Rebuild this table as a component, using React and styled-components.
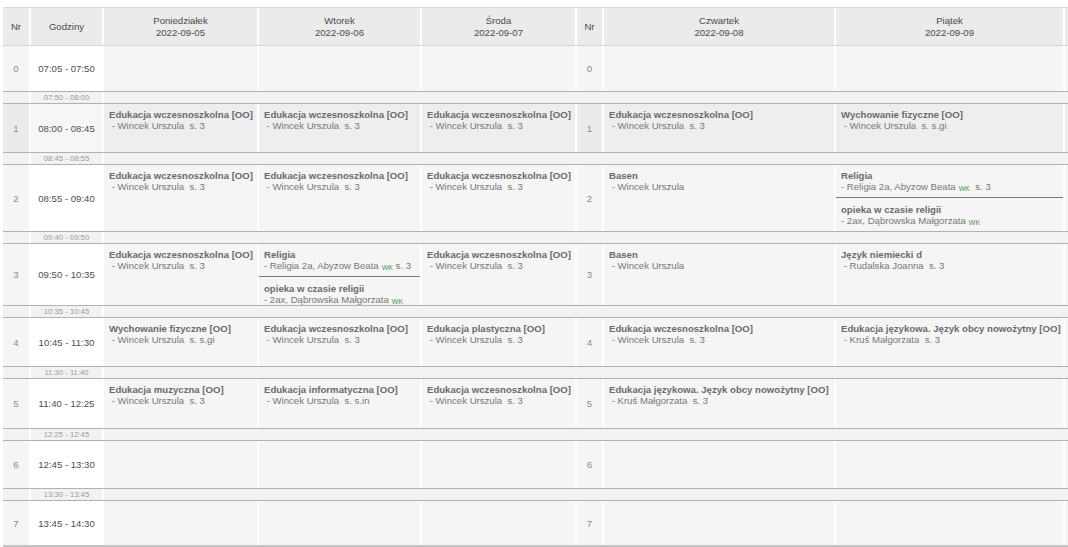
import styled, { createGlobalStyle } from "styled-components";

const GlobalStyle = createGlobalStyle`
  html, body {
    margin: 0;
    padding: 0;
    background: #fff;
    overflow: hidden;
    font-family: "Liberation Sans", Arial, sans-serif;
  }
`;

const COLUMNS = "26px 71px 153px 161px 153px 25px 230px 227px 1fr";

const Wrapper = styled.div`
  padding: 7px 0 0 3px;
  width: 100%;
  box-sizing: border-box;
`;

const Table = styled.div`
  display: flex;
  flex-direction: column;
  border-bottom: 3px solid #c4c4c4;
`;

const Row = styled.div`
  display: grid;
  grid-template-columns: ${COLUMNS};
  column-gap: 2px;
  height: ${(props) => props.h}px;
  background: #fff;
  box-sizing: border-box;
`;

const HeaderRow = styled(Row)`
  border-top: 1px solid #dadada;
  border-bottom: 1px solid #d6d6d6;
`;

const BreakRow = styled(Row)`
  border-top: 1px solid #b2b2b2;
  border-bottom: 1px solid #b2b2b2;
`;

const HeadCell = styled.div`
  background: #ebebeb;
  display: flex;
  flex-direction: column;
  align-items: center;
  justify-content: center;
  font-size: 9.6px;
  line-height: 12px;
  color: #4a4a4a;
`;

const NrCell = styled.div`
  background: ${(props) => (props.highlight ? "#ebebeb" : "#f5f5f5")};
  display: flex;
  align-items: center;
  justify-content: center;
  font-size: 9.6px;
  color: #8a8a8a;
`;

const TimeCell = styled.div`
  background: ${(props) => (props.highlight ? "#f6f6f6" : "#fff")};
  display: flex;
  align-items: center;
  justify-content: center;
  font-size: 9.6px;
  color: #4e4e4e;
`;

const DayCell = styled.div`
  background: ${(props) => (props.highlight ? "#eeeeee" : "#f5f5f5")};
  display: flex;
  flex-direction: column;
  overflow: hidden;
`;

const BreakCell = styled.div`
  background: #f2f2f2;
  display: flex;
  align-items: center;
  justify-content: center;
  font-size: 7.7px;
  color: #9a9a9a;
`;

const BreakFill = styled.div`
  background: #f2f2f2;
  grid-column: 3 / -1;
`;

const Entry = styled.div`
  padding: 5px 5px 4px;
  font-size: 9.6px;
  line-height: 11px;
`;

const Divider = styled.div`
  height: 1px;
  background: #7a7a7a;
  margin-bottom: 1px;
`;

const Title = styled.div`
  font-weight: bold;
  color: #6a6a6a;
  white-space: nowrap;
`;

const Sub = styled.div`
  color: #777;
  white-space: pre;
`;

const Wk = styled.span`
  color: #3f9a3f;
  font-size: 7px;
  margin-left: 3px;
  position: relative;
  top: 1px;
`;

const days = [
  { name: "Poniedziałek", date: "2022-09-05" },
  { name: "Wtorek", date: "2022-09-06" },
  { name: "Środa", date: "2022-09-07" },
  { name: "Czwartek", date: "2022-09-08" },
  { name: "Piątek", date: "2022-09-09" },
];

const entry = (title, sub, wk, tail) => ({ title, sub, wk, tail });

const wczesno = entry("Edukacja wczesnoszkolna [OO]", " - Wincek Urszula  s. 3");
const wf = entry("Wychowanie fizyczne [OO]", " - Wincek Urszula  s. s.gi");
const basen = entry("Basen", " - Wincek Urszula");
const jezykowa = entry(
  "Edukacja językowa. Język obcy nowożytny [OO]",
  " - Kruś Małgorzata  s. 3"
);
const religia = (tail) =>
  entry("Religia", "- Religia 2a, Abyzow Beata", true, tail);
const opieka = entry("opieka w czasie religii", "- 2ax, Dąbrowska Małgorzata", true);

const lessons = [
  { nr: 0, time: "07:05 - 07:50", h: 45, pause: "07:50 - 08:00", cells: [[], [], [], [], []] },
  {
    nr: 1,
    time: "08:00 - 08:45",
    h: 48,
    highlight: true,
    pause: "08:45 - 08:55",
    cells: [[wczesno], [wczesno], [wczesno], [wczesno], [wf]],
  },
  {
    nr: 2,
    time: "08:55 - 09:40",
    h: 66,
    pause: "09:40 - 09:50",
    cells: [[wczesno], [wczesno], [wczesno], [basen], [religia("  s. 3"), opieka]],
  },
  {
    nr: 3,
    time: "09:50 - 10:35",
    h: 61,
    pause: "10:35 - 10:45",
    cells: [
      [wczesno],
      [religia(" s. 3"), opieka],
      [wczesno],
      [basen],
      [entry("Język niemiecki d", " - Rudalska Joanna  s. 3")],
    ],
  },
  {
    nr: 4,
    time: "10:45 - 11:30",
    h: 48,
    pause: "11:30 - 11:40",
    cells: [
      [wf],
      [wczesno],
      [entry("Edukacja plastyczna [OO]", " - Wincek Urszula  s. 3")],
      [wczesno],
      [jezykowa],
    ],
  },
  {
    nr: 5,
    time: "11:40 - 12:25",
    h: 49,
    pause: "12:25 - 12:45",
    cells: [
      [entry("Edukacja muzyczna [OO]", " - Wincek Urszula  s. 3")],
      [entry("Edukacja informatyczna [OO]", " - Wincek Urszula  s. s.in")],
      [wczesno],
      [jezykowa],
      [],
    ],
  },
  { nr: 6, time: "12:45 - 13:30", h: 47, pause: "13:30 - 13:45", cells: [[], [], [], [], []] },
  { nr: 7, time: "13:45 - 14:30", h: 44, cells: [[], [], [], [], []] },
];

const Lesson = ({ items, highlight }) => (
  <DayCell highlight={highlight}>
    {items.map((item, i) => (
      <div key={i}>
        {i > 0 && <Divider />}
        <Entry>
          <Title>{item.title}</Title>
          <Sub>
            {item.sub}
            {item.wk && <Wk>WK</Wk>}
            {item.tail}
          </Sub>
        </Entry>
      </div>
    ))}
  </DayCell>
);

const DayHead = ({ day }) => (
  <HeadCell>
    <span>{day.name}</span>
    <span>{day.date}</span>
  </HeadCell>
);

const App = () => {
  return (
    <>
      <GlobalStyle />
      <Wrapper>
        <Table>
          <HeaderRow h={39}>
            <HeadCell>Nr</HeadCell>
            <HeadCell>Godziny</HeadCell>
            {days.slice(0, 3).map((d) => (
              <DayHead key={d.name} day={d} />
            ))}
            <HeadCell>Nr</HeadCell>
            {days.slice(3).map((d) => (
              <DayHead key={d.name} day={d} />
            ))}
            <HeadCell />
          </HeaderRow>
          {lessons.map((l) => (
            <div key={l.nr}>
              <Row h={l.h}>
                <NrCell highlight={l.highlight}>{l.nr}</NrCell>
                <TimeCell highlight={l.highlight}>{l.time}</TimeCell>
                {l.cells.slice(0, 3).map((items, i) => (
                  <Lesson key={i} items={items} highlight={l.highlight} />
                ))}
                <NrCell highlight={l.highlight}>{l.nr}</NrCell>
                {l.cells.slice(3).map((items, i) => (
                  <Lesson key={i} items={items} highlight={l.highlight} />
                ))}
                <DayCell highlight={l.highlight} />
              </Row>
              {l.pause && (
                <BreakRow h={13}>
                  <BreakCell />
                  <BreakCell>{l.pause}</BreakCell>
                  <BreakFill />
                </BreakRow>
              )}
            </div>
          ))}
        </Table>
      </Wrapper>
    </>
  );
};

export default App;
